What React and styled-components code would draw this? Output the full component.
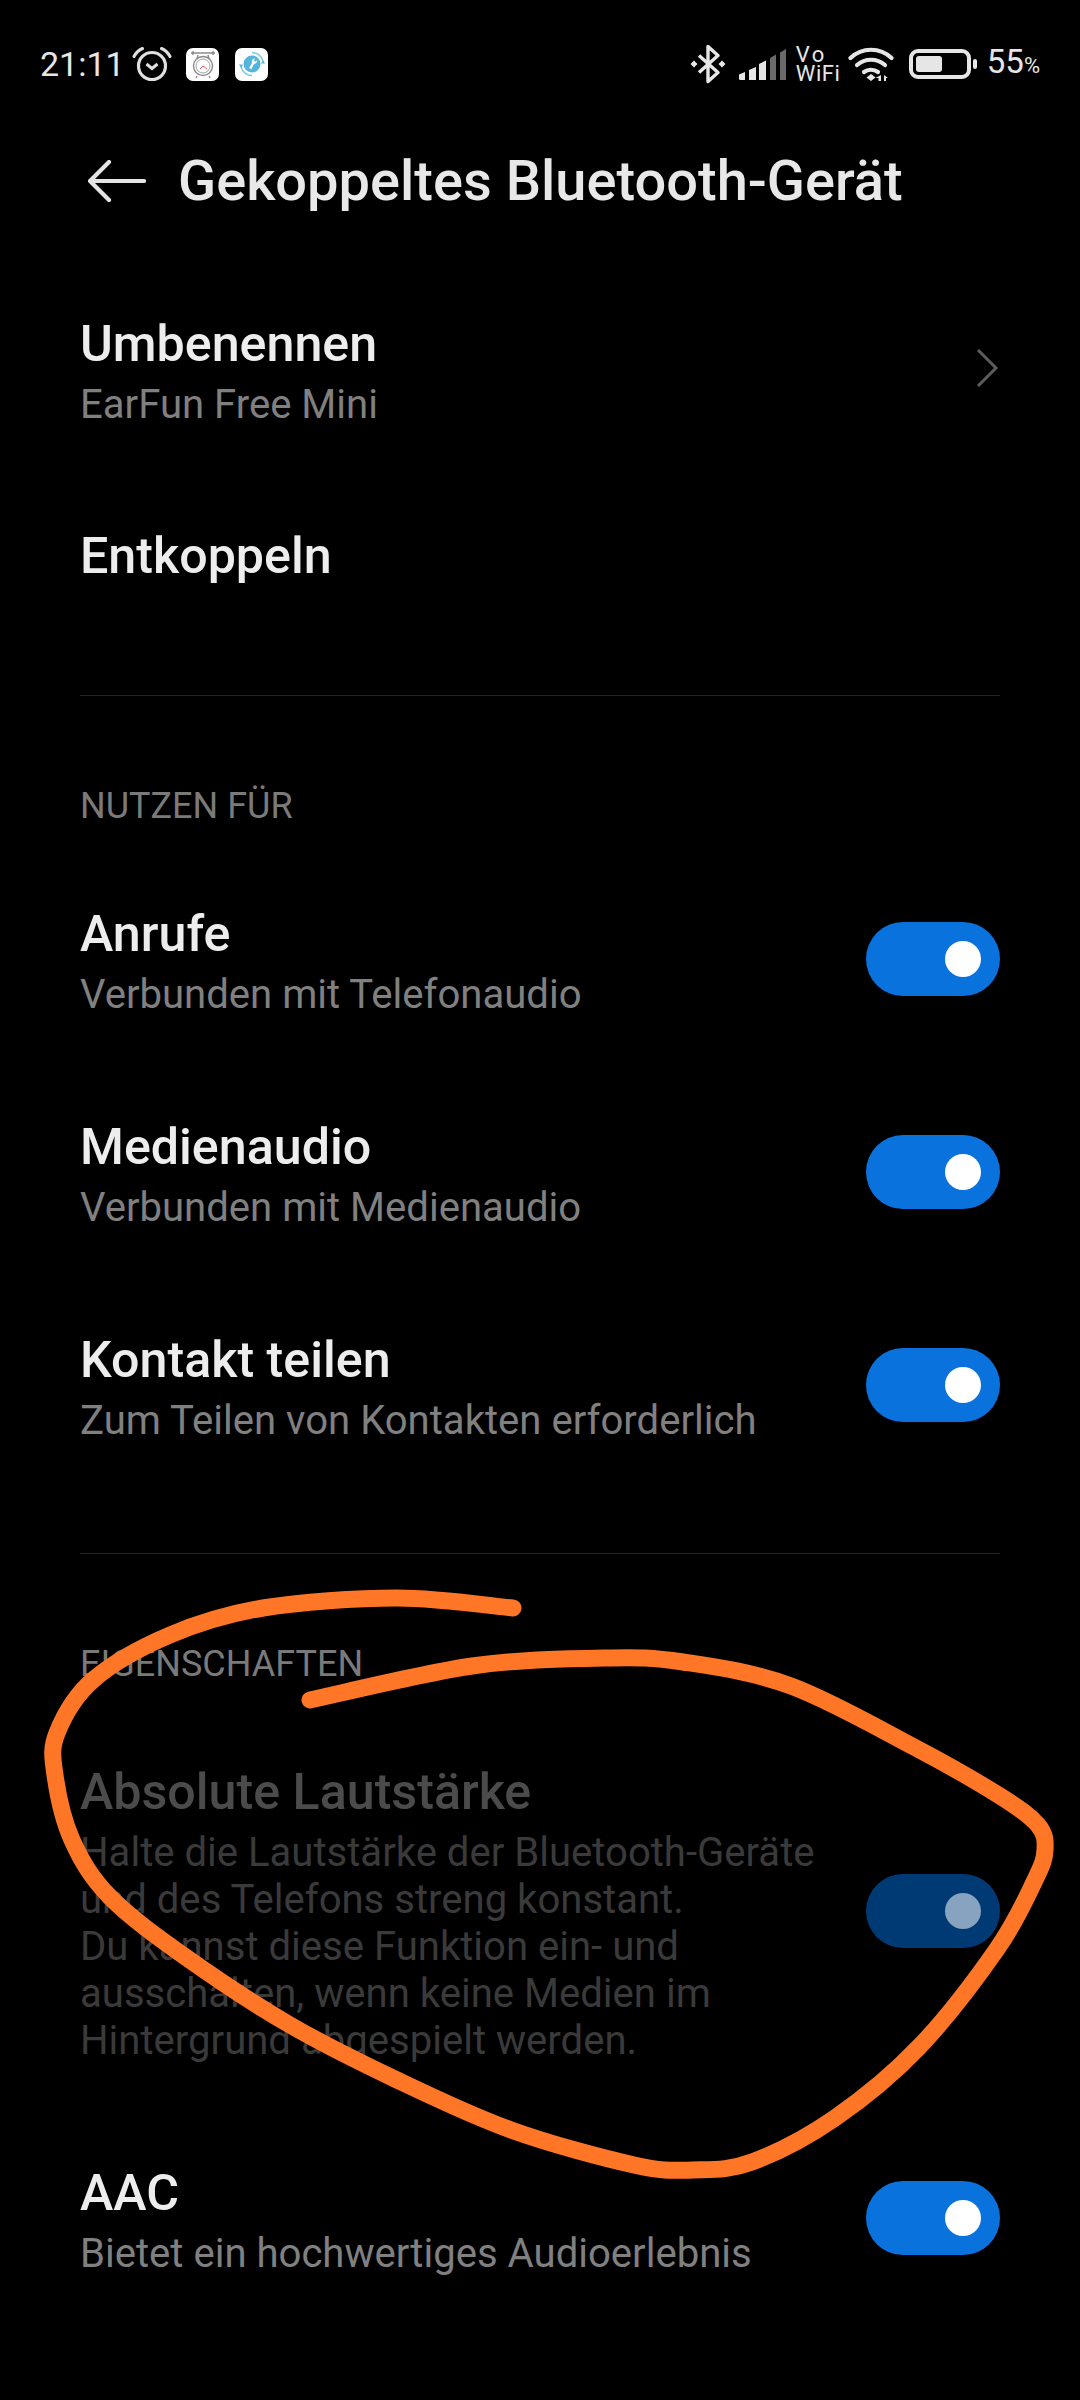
import React from "react";
import styled, { createGlobalStyle } from "styled-components";

const Global = createGlobalStyle`
  html, body { margin: 0; padding: 0; background: #000; }
  body { font-family: Roboto, "Liberation Sans", sans-serif; }
`;

const Page = styled.div`
  position: relative;
  width: 1080px;
  height: 2400px;
  background: #000;
  overflow: hidden;
`;

const StatusBar = styled.div`
  height: 112px;
  box-sizing: border-box;
  padding: 25px 40px 0 40px;
  display: flex;
  justify-content: space-between;
  align-items: flex-start;
  color: #e6e6e6;
`;

const StatusGroup = styled.div`
  display: flex;
  align-items: center;
  height: 78px;
`;

const Time = styled.span`
  font-size: 34px;
  width: 92px;
  line-height: 40px;
`;

const AppIcon = styled.div`
  width: 33px;
  height: 33px;
  border-radius: 7px;
  background: #fff;
  margin-left: ${(p) => p.$ml}px;
  display: flex;
  align-items: center;
  justify-content: center;
`;

const Vo = styled.div`
  width: 41px;
  margin: 0 11px 0 9px;
  display: flex;
  flex-direction: column;
  font-size: 22px;
  line-height: 19px;
  letter-spacing: 0.6px;
  align-items: flex-start;
`;

const VoTop = styled.span`
  letter-spacing: 2.5px;
`;

const BatteryShell = styled.div`
  box-sizing: border-box;
  width: 62px;
  height: 30px;
  border: 4px solid #e6e6e6;
  border-radius: 9px;
  margin-left: 15px;
  padding: 3px;
  display: flex;
`;

const BatteryFill = styled.div`
  width: 26px;
  background: #e6e6e6;
  border-radius: 3px;
`;

const BatteryNub = styled.div`
  width: 4px;
  height: 10px;
  background: #e6e6e6;
  border-radius: 2px;
  margin: 0 10px 0 2px;
`;

const Percent = styled.span`
  font-size: 33px;
  line-height: 40px;
  small { font-size: 22px; }
`;

const Header = styled.div`
  height: 138px;
  margin-bottom: 14px;
  box-sizing: border-box;
  padding-left: 88px;
  display: flex;
  align-items: center;
`;

const Title = styled.h1`
  margin: 0 0 0 32px;
  font-size: 56px;
  line-height: 60px;
  font-weight: 500;
  color: #e8e8e8;
`;

const List = styled.div`
  padding: 0 80px;
`;

const Row = styled.div`
  display: flex;
  align-items: center;
  justify-content: space-between;
  padding: ${(p) => (p.$single ? "49px 0" : "50px 0 49px")};
`;

const RowText = styled.div`
  min-width: 0;
`;

const RowTitle = styled.div`
  font-size: 50.2px;
  line-height: 60px;
  font-weight: 500;
  color: ${(p) => (p.$off ? "#4b4b4b" : "#ededed")};
`;

const RowSub = styled.div`
  margin-top: 7px;
  font-size: 40.1px;
  line-height: 47px;
  color: ${(p) => (p.$off ? "#3a3a3a" : "#808080")};
  white-space: pre-line;
`;

const Toggle = styled.div`
  flex: none;
  width: 134px;
  height: 74px;
  border-radius: 37px;
  background: ${(p) => (p.$off ? "#003a75" : "#0a72dd")};
  position: relative;
  margin-top: -4px;
`;

const Knob = styled.div`
  position: absolute;
  right: 19px;
  top: 19px;
  width: 36px;
  height: 36px;
  border-radius: 50%;
  background: ${(p) => (p.$off ? "#88a3c0" : "#fff")};
`;

const Divider = styled.div`
  height: 1px;
  background: #242424;
  margin-top: 60px;
`;

const Label = styled.div`
  margin: 87px 0 24px;
  font-size: 36px;
  line-height: 47px;
  color: #7a7a7a;
`;

const Scribble = styled.svg`
  position: absolute;
  left: 0;
  top: 0;
  pointer-events: none;
`;

const ChevronIcon = styled.svg`
  margin: -6px 1px 0 0;
`;

const SignalIcon = styled.svg`
  margin-left: 13px;
`;

const pts = [
  [513,1608],[397,1598],[263,1608],[170,1635],[93,1680],[57,1733],[55,1775],[72,1840],[110,1897],[187,1958],[290,2025],[397,2080],[511,2130],[634,2165],[693,2170],[752,2162],[835,2118],[919,2047],[997,1949],[1035,1880],[1045,1850],[1038,1825],[1000,1796],[914,1747],[791,1686],[683,1662],[604,1658],[472,1666],[310,1700],
];

function smooth(p) {
  let d = `M${p[0][0]} ${p[0][1]}`;
  for (let i = 0; i < p.length - 1; i++) {
    const a = p[Math.max(i - 1, 0)], b = p[i], c = p[i + 1], e = p[Math.min(i + 2, p.length - 1)];
    const c1 = [b[0] + (c[0] - a[0]) / 6, b[1] + (c[1] - a[1]) / 6];
    const c2 = [c[0] - (e[0] - b[0]) / 6, c[1] - (e[1] - b[1]) / 6];
    d += `C${c1[0].toFixed(1)} ${c1[1].toFixed(1)} ${c2[0].toFixed(1)} ${c2[1].toFixed(1)} ${c[0]} ${c[1]}`;
  }
  return d;
}

const Alarm = () => (
  <svg width="40" height="36" viewBox="0 0 40 36" fill="none" stroke="#e0e0e0">
    <circle cx="20" cy="20" r="13.5" strokeWidth="3.2" />
    <path d="M14.5 18l5.5 4.5 5.5-4.5" strokeWidth="3" />
    <path d="M2 10.5C4 6.5 7 4 10.5 2.5M38 10.5C36 6.5 33 4 29.5 2.5" strokeWidth="3" strokeLinecap="round" />
  </svg>
);

const ClockApp = () => (
  <svg width="28" height="30" viewBox="0 0 28 30" fill="none" stroke="#8a8a8a" strokeWidth="1.4">
    <path d="M2 4h24M4 2v4M24 2v4M9 6l-1 4M19 6l1 4" />
    <circle cx="14" cy="17" r="9.5" />
    <circle cx="14" cy="17" r="7" strokeWidth="0.8" />
    <path d="M14 17l-3 3M14 17l4 3" stroke="#d0605a" strokeWidth="1" />
    <path d="M8 27l-1 2M20 27l1 2" />
  </svg>
);

const SyncApp = () => (
  <svg width="30" height="30" viewBox="0 0 30 30" fill="none">
    <circle cx="15" cy="15" r="8.5" fill="#52b5dc" />
    <path d="M15 3.5A11.5 11.5 0 0 1 26 12M15 26.5A11.5 11.5 0 0 1 4 18" stroke="#7cc8e4" strokeWidth="1.4" />
    <path d="M2 15.5l2 3.5 2-3.5zM28 14.5l-2-3.5-2 3.5z" fill="#52b5dc" />
    <path d="M18 9.5a3.2 3.2 0 0 0-3 4.5l-3 5 2.3 1.2 2.7-5.2a3.2 3.2 0 0 0 3.2-3.8l-1.9 1.3-1.4-.8z" fill="#fff" />
  </svg>
);

const Bluetooth = () => (
  <svg width="36" height="40" viewBox="0 0 36 40" fill="none" stroke="#e6e6e6" strokeWidth="3.4" strokeLinejoin="round">
    <path d="M9 11.5l19 17-10 9V2.5l10 9-19 17" />
    <path d="M4 16.5l3.5 3.5L4 23.5.5 20zM32 16.5l3.5 3.5-3.5 3.5-3.5-3.5z" fill="#e6e6e6" stroke="none" />
  </svg>
);

const Signal = () => (
  <SignalIcon width="48" height="31" viewBox="0 0 48 31">
    <path d="M0 25.5L6 23v8H1.5A1.5 1.5 0 0 1 0 29.5z" fill="#e6e6e6" />
    <path d="M10 21l7-3v13h-7z" fill="#e6e6e6" />
    <path d="M20 15l7-3.5V31h-7z" fill="#e6e6e6" />
    <path d="M31 9l6-3.5V31h-6z" fill="#6a6a6a" />
    <path d="M41 3.5L47 0v31h-6z" fill="#6a6a6a" />
  </SignalIcon>
);

const Wifi = () => (
  <svg width="46" height="35" viewBox="0 0 46 35" fill="none" stroke="#e6e6e6" strokeWidth="4.2" strokeLinecap="round">
    <path d="M2.5 11C14 0 32 0 43.5 11" />
    <path d="M9 18c8-7 20-7 28 0" />
    <path d="M16 25c4-3 10-3 14 0" />
    <path d="M23 27l-4.5 3.5L23 34l4.5-3.5z" fill="#e6e6e6" stroke="none" />
    <path d="M33 28v6h-2.5v-3l-3 0zM36 34v-6l4 3h-2v3z" fill="#e6e6e6" stroke="none" />
  </svg>
);

const Back = () => (
  <svg width="58" height="42" viewBox="0 0 58 42" fill="none" stroke="#e4e4e4" strokeWidth="4.2" strokeLinecap="round" strokeLinejoin="round">
    <path d="M56 21H3M21 2L2 21l19 19" />
  </svg>
);

const Chevron = () => (
  <ChevronIcon width="24" height="40" viewBox="0 0 24 40" fill="none" stroke="#5c5c5c" strokeWidth="3">
    <path d="M3 2l18 18L3 38" />
  </ChevronIcon>
);

const SwitchRow = ({ title, sub, off }) => (
  <Row>
    <RowText>
      <RowTitle $off={off}>{title}</RowTitle>
      <RowSub $off={off}>{sub}</RowSub>
    </RowText>
    <Toggle $off={off}><Knob $off={off} /></Toggle>
  </Row>
);

export default function App() {
  return (
    <Page>
      <Global />
      <StatusBar>
        <StatusGroup>
          <Time>21:11</Time>
          <Alarm />
          <AppIcon $ml={14}><ClockApp /></AppIcon>
          <AppIcon $ml={16}><SyncApp /></AppIcon>
        </StatusGroup>
        <StatusGroup>
          <Bluetooth />
          <Signal />
          <Vo><VoTop>Vo</VoTop><span>WiFi</span></Vo>
          <Wifi />
          <BatteryShell><BatteryFill /></BatteryShell>
          <BatteryNub />
          <Percent>55<small>%</small></Percent>
        </StatusGroup>
      </StatusBar>
      <Header>
        <Back />
        <Title>Gekoppeltes Bluetooth-Gerät</Title>
      </Header>
      <List>
        <Row>
          <RowText>
            <RowTitle>Umbenennen</RowTitle>
            <RowSub>EarFun Free Mini</RowSub>
          </RowText>
          <Chevron />
        </Row>
        <Row $single><RowTitle>Entkoppeln</RowTitle></Row>
        <Divider />
        <Label>NUTZEN FÜR</Label>
        <SwitchRow title="Anrufe" sub="Verbunden mit Telefonaudio" />
        <SwitchRow title="Medienaudio" sub="Verbunden mit Medienaudio" />
        <SwitchRow title="Kontakt teilen" sub="Zum Teilen von Kontakten erforderlich" />
        <Divider />
        <Label>EIGENSCHAFTEN</Label>
        <SwitchRow
          off
          title="Absolute Lautstärke"
          sub={"Halte die Lautstärke der Bluetooth-Geräte\nund des Telefons streng konstant.\nDu kannst diese Funktion ein- und\nausschalten, wenn keine Medien im\nHintergrund abgespielt werden."}
        />
        <SwitchRow title="AAC" sub="Bietet ein hochwertiges Audioerlebnis" />
      </List>
      <Scribble width="1080" height="2400" viewBox="0 0 1080 2400" fill="none">
        <path d={smooth(pts)} stroke="#ff7627" strokeWidth="17" strokeLinecap="round" strokeLinejoin="round" />
      </Scribble>
    </Page>
  );
}
